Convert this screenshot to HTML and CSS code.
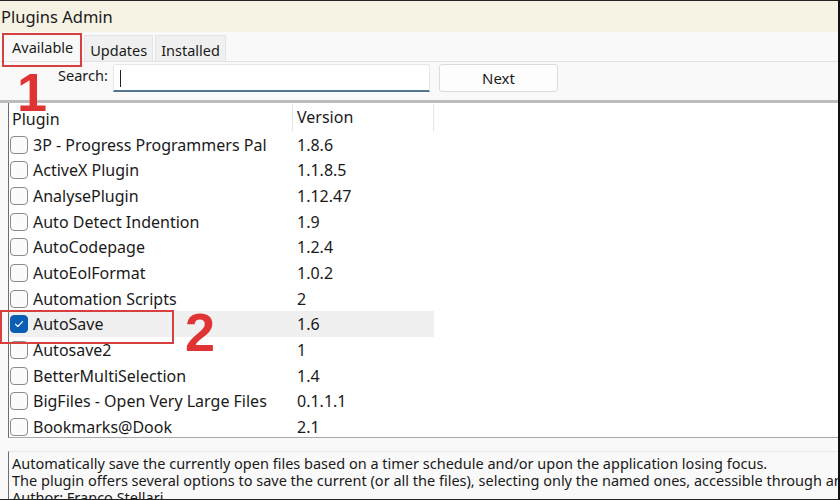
FILE: index.html
```html
<!DOCTYPE html>
<html lang="en">
<head>
    <meta charset="UTF-8">
    <title>Plugins Admin</title>
    <link rel="stylesheet" href="styles.css">
</head>
<body>
    <div class="window">
        <div class="titlebar">Plugins Admin</div>

        <div class="tabs">
            <div class="tab active">Available</div>
            <div class="tab">Updates</div>
            <div class="tab">Installed</div>
        </div>

        <div class="search-row">
            <label class="search-label">Search:</label>
            <div class="search-input"><span class="caret"></span></div>
            <button class="btn">Next</button>
        </div>

        <div class="divider"></div>

        <div class="list">
            <div class="row head">
                <div class="col-name">Plugin</div>
                <div class="col-ver">Version</div>
            </div>
            <div class="row"><div class="col-name"><span class="check"></span>3P - Progress Programmers Pal</div><div class="col-ver">1.8.6</div></div>
            <div class="row"><div class="col-name"><span class="check"></span>ActiveX Plugin</div><div class="col-ver">1.1.8.5</div></div>
            <div class="row"><div class="col-name"><span class="check"></span>AnalysePlugin</div><div class="col-ver">1.12.47</div></div>
            <div class="row"><div class="col-name"><span class="check"></span>Auto Detect Indention</div><div class="col-ver">1.9</div></div>
            <div class="row"><div class="col-name"><span class="check"></span>AutoCodepage</div><div class="col-ver">1.2.4</div></div>
            <div class="row"><div class="col-name"><span class="check"></span>AutoEolFormat</div><div class="col-ver">1.0.2</div></div>
            <div class="row"><div class="col-name"><span class="check"></span>Automation Scripts</div><div class="col-ver">2</div></div>
            <div class="row selected">
                <div class="col-name">
                    <span class="check checked">
                        <svg viewBox="0 0 18 18" width="18" height="18"><path d="M5 9.2l2.6 2.6L13 6.4" fill="none" stroke="#fff" stroke-width="1.3" stroke-linecap="round" stroke-linejoin="round"/></svg>
                    </span>AutoSave
                </div>
                <div class="col-ver">1.6</div>
            </div>
            <div class="row"><div class="col-name"><span class="check"></span>Autosave2</div><div class="col-ver">1</div></div>
            <div class="row"><div class="col-name"><span class="check"></span>BetterMultiSelection</div><div class="col-ver">1.4</div></div>
            <div class="row"><div class="col-name"><span class="check"></span>BigFiles - Open Very Large Files</div><div class="col-ver">0.1.1.1</div></div>
            <div class="row"><div class="col-name"><span class="check"></span>Bookmarks@Dook</div><div class="col-ver">2.1</div></div>
        </div>

        <div class="desc">
            <p>Automatically save the currently open files based on a timer schedule and/or upon the application losing focus.</p>
            <p>The plugin offers several options to save the current (or all the files), selecting only the named ones, accessible through an</p>
            <p>Author: Franco Stellari</p>
        </div>

        <!-- annotations -->
        <div class="mark mark-tab"></div>
        <div class="num num-1">1</div>
        <div class="mark mark-row"></div>
        <div class="num num-2">2</div>
    </div>
</body>
</html>
```

FILE: styles.css
```css
* {
    box-sizing: border-box;
}
body {
    margin: 0;
    padding: 0;
    background: #f9f9f9;
    font-family: 'Noto Sans', 'Open Sans', sans-serif;
    color: #1a1a1a;
}
.window {
    position: relative;
    width: 840px;
    height: 500px;
    overflow: hidden;
    background: #f9f9f9;
    border-top: 1px solid #222;
    border-right: 2px solid #111;
    border-bottom: 1px solid #222;
    display: flex;
    flex-direction: column;
}
.titlebar {
    height: 31px;
    flex-shrink: 0;
    background: #f6f3e5;
    font-size: 16.5px;
    line-height: 31px;
    padding-left: 1px;
}
.tabs {
    height: 30px;
    flex-shrink: 0;
    display: flex;
    padding-left: 2px;
    border-bottom: 1px solid #e2e2e2;
    font-size: 14.5px;
}
.tab {
    padding: 4px 5px 0 5px;
    background: #f0f0f0;
    border: 1px solid #e4e4e4;
    border-bottom: none;
    margin-top: 3px;
    margin-right: 2px;
}
.tab.active {
    background: #f9f9f9;
    margin-top: 0;
    margin-right: 1px;
    padding: 4px 9px 0 9px;
    border-color: transparent;
}
.search-row {
    height: 38px;
    flex-shrink: 0;
    display: flex;
    align-items: flex-start;
    padding-top: 2px;
}
.search-label {
    font-size: 14.5px;
    margin-left: 58px;
    width: 55px;
    padding-top: 1px;
}
.search-input {
    width: 317px;
    height: 28px;
    background: #fff;
    border: 1px solid #e6e6e6;
    border-bottom: 2px solid #4f7590;
    border-radius: 3px 3px 0 0;
    padding: 5px 6px;
}
.caret {
    display: block;
    width: 1px;
    height: 17px;
    background: #222;
}
.btn {
    margin-left: 9px;
    width: 119px;
    height: 28px;
    background: #fdfdfd;
    border: 1px solid #dcdcdc;
    border-radius: 3px;
    font-family: inherit;
    font-size: 15px;
    color: #1a1a1a;
}
.divider {
    height: 3px;
    flex-shrink: 0;
    background: #bcbcbc;
}
.list {
    flex-shrink: 0;
    height: 335px;
    margin-left: 8px;
    background: #fff;
    border-left: 1px solid #6e6e6e;
    border-bottom: 1px solid #a8a8a8;
    padding-top: 1px;
    font-size: 16px;
}
.row {
    display: flex;
    height: 25.65px;
    align-items: center;
    width: 425px;
}
.row.head {
    height: 28px;
}
.row.head .col-name,
.row.head .col-ver {
    height: 27px;
    align-self: flex-start;
    padding-top: 2px;
    border-right: 1px solid #e6e6e6;
}
.row.head .col-name {
    padding-left: 3px;
}
.col-name {
    width: 284px;
    display: flex;
    align-items: center;
    padding-left: 1px;
    white-space: nowrap;
}
.col-ver {
    width: 141px;
    padding-left: 4px;
}
.row.selected {
    background: #f0f0f0;
}
.check {
    width: 18px;
    height: 18px;
    border: 1px solid #8c8c8c;
    border-radius: 4px;
    background: #fbfbfb;
    margin-right: 5px;
    flex-shrink: 0;
}
.check.checked {
    background: #0a5fb4;
    border-color: #0a5fb4;
    display: flex;
    align-items: center;
    justify-content: center;
}
.check.checked svg {
    display: block;
}
.desc {
    margin-left: 8px;
    margin-top: 13px;
    flex: 1;
    border-left: 1px solid #6e6e6e;
    border-top: 1px solid #e8e8e8;
    padding: 3px 0 0 3px;
    font-size: 14.5px;
    line-height: 17px;
    white-space: nowrap;
}
.desc p {
    margin: 0;
}
.mark {
    position: absolute;
    border: 2px solid #d8403f;
}
.mark-tab {
    left: 2px;
    top: 32px;
    width: 80px;
    height: 34px;
}
.mark-row {
    left: 0;
    top: 309px;
    width: 174px;
    height: 34px;
}
.num {
    position: absolute;
    color: #e03434;
    font-family: 'Liberation Sans', Arial, sans-serif;
    font-weight: bold;
    font-size: 54px;
    line-height: 1;
}
.num-1 {
    left: 17px;
    top: 64px;
}
.num-2 {
    left: 185px;
    top: 304px;
}
```
